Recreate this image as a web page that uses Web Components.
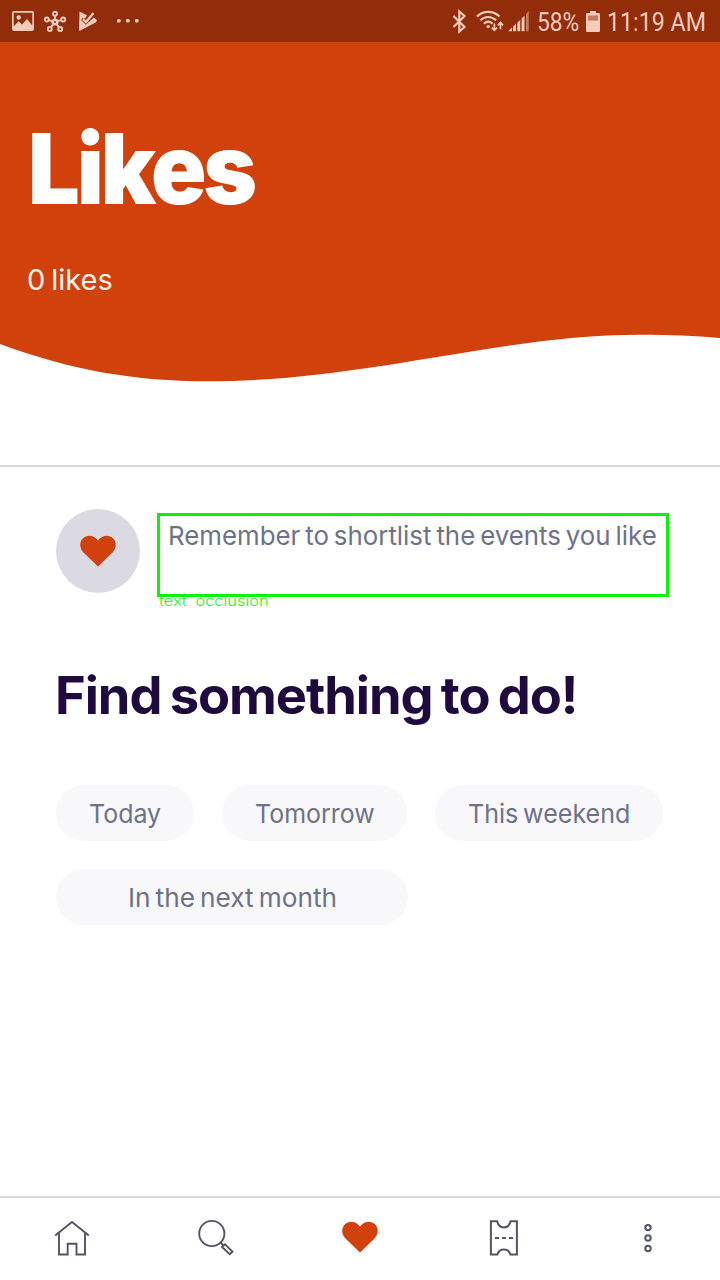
<!DOCTYPE html>
<html lang="en">
<head>
<meta charset="utf-8">
<title>Likes</title>
<style>
html,body{margin:0;padding:0;background:#fff}
body{font-family:Inter,"Liberation Sans",sans-serif}
</style>
</head>
<body>
<likes-app></likes-app>
<script>
const define = (name, html, setup) => {
  const t = document.createElement('template');
  t.innerHTML = html;
  customElements.define(name, class extends HTMLElement {
    constructor() {
      super();
      this.attachShadow({ mode: 'open' }).append(t.content.cloneNode(true));
    }
    connectedCallback() { if (setup) setup(this); }
  });
};

/* A single line of text condensed or widened to the advance width in "span". */
define('fit-text', `<style>
:host{display:block;white-space:nowrap;flex:none}
span{display:inline-block;transform-origin:0 50%}
</style><span><slot></slot></span>`, el => {
  const span = el.shadowRoot.querySelector('span');
  const target = +el.getAttribute('span');
  el.style.width = target + 'px';
  span.style.transform = `scaleX(${target / span.offsetWidth})`;
});

const ICONS = {
  image: [22, 20, '<path fill-rule="evenodd" d="M2 0h18a2 2 0 0 1 2 2v16a2 2 0 0 1-2 2H2a2 2 0 0 1-2-2V2a2 2 0 0 1 2-2zM1.700 1.700v13.600l5-5 3.300 3.300 5-5.600 5.300 6.500V1.700z"/><circle cx="6.700" cy="6.500" r="2.200"/>'],
  hub: [22, 21, '<g fill="none" stroke="currentColor" stroke-width="1.900"><circle cx="11" cy="11" r="2.300" stroke-width="2.600"/><circle cx="11" cy="2.700" r="2"/><circle cx="2.800" cy="8.500" r="2"/><circle cx="19.200" cy="8.500" r="2"/><circle cx="5.800" cy="18" r="2"/><circle cx="16.200" cy="18" r="2"/><path d="M11 4.700v3.500M4.600 9.100l3.700 1M17.400 9.100l-3.700 1M6.900 16.400l2.400-3.300M15.100 16.400l-2.400-3.300"/></g>'],
  play: [20, 20, '<path d="M1.500.5 9 4.200 7.800 6.500 6 7.800 4.500 6.900 3.200 8.900 7.800 13.700 15.800 6.500 19 9 18 11.200 2 19.700H1z"/><path d="M5 8.200l3 2.900L15.500 2" fill="none" stroke="currentColor" stroke-width="2.300"/>'],
  more: [24, 4, '<rect y="0" width="3.600" height="3.600" rx="1.300"/><rect x="9" width="3.600" height="3.600" rx="1.300"/><rect x="18" width="3.600" height="3.600" rx="1.300"/>'],
  bluetooth: [15, 23, '<path d="M1.500 6l11 11-5.200 4.500V1.500L12.500 6l-11 11" fill="none" stroke="currentColor" stroke-width="2.200"/>'],
  wifi: [29, 23, '<g fill="none" stroke="currentColor" stroke-width="2.200"><path d="M1 6.500C7.500.2 17 .2 23.500 6.500M4.300 10.300c4.700-4.400 11.100-4.400 15.800 0M7.900 13.700c2.700-2.500 6-2.500 8.700 0"/></g><circle cx="12.200" cy="16.600" r="1.700"/><g fill="none" stroke="currentColor" stroke-width="1.700"><path d="M18.400 13.500v6.500M15.800 17.600l2.600 2.700 2.600-2.700M24.500 19.200v-6.200M21.900 15.300l2.600-2.700 2.600 2.700"/></g>'],
  signal: [22, 22, '<path d="M0 21.300 4 17.600v3.700zM5 16.600l3-2.800v7.500H5zM9.300 12.700l2.900-2.800v11.400H9.300zM13.600 8.600l2.900-2.800v15.500h-2.900z"/><path opacity=".5" d="M18 4.300 20.700.8v20.500H18z"/>'],
  battery: [14, 21, '<path d="M4 0h6v2h2.800q1.200 0 1.200 1.200v16.600q0 1.200-1.200 1.200H1.200Q0 21 0 19.800V3.200Q0 2 1.200 2H4z"/><path fill="#922c09" opacity=".5" d="M2 4.500h10v5H2z"/>'],
  heart: [36, 32, '<path d="M18 31.500 3.700 17.700C-.8 13.300-.8 6.800 3 3.300c4.200-4 11-3.200 15 2.200 4-5.400 10.800-6.200 15-2.200 3.800 3.500 3.800 10-.7 14.400z"/>'],
  home: [36, 36, '<path fill="none" stroke="currentColor" stroke-width="1.900" d="M1.200 15.500 18 2l16.800 13.500M5 13v21.500h8.700V23.800h8.800v10.700H31V13"/>'],
  search: [36, 36, '<g fill="none" stroke="currentColor" stroke-width="1.900"><circle cx="13.800" cy="13.500" r="12.600"/><path d="M22.500 22.500l2.900 3"/><path d="M24 27l3-2.800 7.500 7.600-2.700 2.400z"/></g>'],
  ticket: [36, 36, '<path fill="none" stroke="currentColor" stroke-width="2" d="M4.900 1.300h6.300c.9 4 3.200 6.100 6.700 6.100s5.800-2.100 6.700-6.100h6.300v33.300h-6.500c-.9-3.500-3-5.200-6.500-5.200s-5.600 1.700-6.500 5.200H4.900z"/><path fill="none" stroke="currentColor" stroke-width="2" stroke-dasharray="4 3" d="M9 18h18"/>'],
  dots: [36, 36, '<g fill="none" stroke="currentColor" stroke-width="2"><circle cx="18" cy="7.600" r="2.700"/><circle cx="18" cy="18" r="2.700"/><circle cx="18" cy="28.500" r="2.700"/></g>'],
};
define('ui-icon', `<style>:host{display:block;flex:none}svg{display:block;fill:currentColor;overflow:visible}</style><svg></svg>`, el => {
  const [w, h, body] = ICONS[el.getAttribute('name')];
  const svg = el.shadowRoot.querySelector('svg');
  svg.setAttribute('width', w);
  svg.setAttribute('height', h);
  svg.setAttribute('viewBox', `0 0 ${w} ${h}`);
  svg.innerHTML = body;
});

define('status-bar', `<style>
:host{display:flex;justify-content:space-between;height:42px;background:#922c09;color:#f5cbbb;box-sizing:border-box;padding:0 14px 0 12px}
div{display:flex;align-items:center}
fit-text{font:400 26px/44px Roboto,sans-serif;padding-top:2px}
</style>
<div><ui-icon name="image"></ui-icon><ui-icon name="hub" style="margin-left:10px"></ui-icon><ui-icon name="play" style="margin-left:12px"></ui-icon><ui-icon name="more" style="margin-left:19px"></ui-icon></div>
<div><ui-icon name="bluetooth"></ui-icon><ui-icon name="wifi" style="margin-left:9px"></ui-icon><ui-icon name="signal" style="margin-left:3px"></ui-icon><fit-text span="42" style="margin-left:7px">58%</fit-text><ui-icon name="battery" style="margin-left:7px"></ui-icon><fit-text span="99" style="margin-left:7px">11:19 AM</fit-text></div>`);

define('page-hero', `<style>
:host{display:grid;height:423px;color:#fff}
svg,section{grid-area:1/1}
section{padding:77px 0 0 28px;display:flex;flex-direction:column}
.title{font-size:97px;line-height:100px;font-weight:900;letter-spacing:-.035em}
.count{font-size:28px;line-height:40px;margin:41px 0 0 -1px;color:#fff3ea;word-spacing:-.08em}
</style>
<svg width="720" height="423" viewBox="0 42 720 423"><path fill="#d1410c" d="M0 42H720V338C695 335.500 670 334.700 640 334.700C500 334.700 365 381.300 208 381.300C135 381.300 70 370 0 344Z"/></svg>
<section><fit-text class="title" span="226"><slot name="title"></slot></fit-text><fit-text class="count" span="86"><slot name="count"></slot></fit-text></section>`);

define('reminder-row', `<style>
:host{display:flex;gap:17px;padding:42px 0 0 56px;height:88px}
.avatar{width:84px;height:84px;border-radius:50%;background:#dbdae3;color:#d1410c;display:grid;place-items:center;padding-bottom:1px;box-sizing:border-box}
.note{margin-top:4px;width:512px}
.box{height:84px;box-sizing:border-box;border:3px solid #0bf30b;padding:4px 0 0 8px;color:#6f7287;font-size:26px;line-height:32px;word-spacing:-.09em}
.tag{font:300 14px/16px Inter,sans-serif;color:#1bf01b;margin:-4px 0 0 2px;word-spacing:.25em}
</style>
<div class="avatar"><ui-icon name="heart"></ui-icon></div>
<div class="note"><div class="box"><fit-text span="489"><slot></slot></fit-text></div><fit-text class="tag" span="110">text occlusion</fit-text></div>`);

define('filter-chip', `<style>
:host{display:flex;justify-content:center;height:56px;border-radius:28px;background:#f8f7fa;color:#6f7287;font-size:26px;line-height:58px;word-spacing:-.09em}
</style><slot></slot>`);

define('find-section', `<style>
:host{display:block;padding:69px 0 0 56px}
h2{margin:0;font-size:52px;line-height:60px;font-weight:700;color:#1e0a3c;letter-spacing:-.02em;word-spacing:-.06em}
.chips{display:flex;flex-wrap:wrap;gap:28px;margin-top:59px}
</style>
<h2><fit-text span="522" style="margin-left:-1px">Find something to do!</fit-text></h2>
<div class="chips">
<filter-chip style="width:138px"><fit-text span="72">Today</fit-text></filter-chip>
<filter-chip style="width:185px"><fit-text span="120">Tomorrow</fit-text></filter-chip>
<filter-chip style="width:228px"><fit-text span="162">This weekend</fit-text></filter-chip>
<filter-chip style="width:352px"><fit-text span="209">In the next month</fit-text></filter-chip>
</div>`);

define('tab-bar', `<style>
:host{display:grid;grid-template-columns:repeat(5,1fr);place-items:center;height:84px;box-sizing:border-box;border-top:2px solid #d9dadb;color:#535563;padding-bottom:2px}
.on{color:#d1410c;margin-bottom:2px}
</style>
<ui-icon name="home"></ui-icon><ui-icon name="search"></ui-icon><ui-icon class="on" name="heart"></ui-icon><ui-icon name="ticket"></ui-icon><ui-icon name="dots"></ui-icon>`);

define('likes-app', `<style>
:host{display:flex;flex-direction:column;width:720px;height:1280px;overflow:hidden;background:#fff}
main{flex:1;border-top:2px solid #d9dadb}
</style>
<status-bar></status-bar>
<page-hero><span slot="title">Likes</span><span slot="count">0 likes</span></page-hero>
<main><reminder-row>Remember to shortlist the events you like</reminder-row><find-section></find-section></main>
<tab-bar></tab-bar>`);
</script>
</body>
</html>
